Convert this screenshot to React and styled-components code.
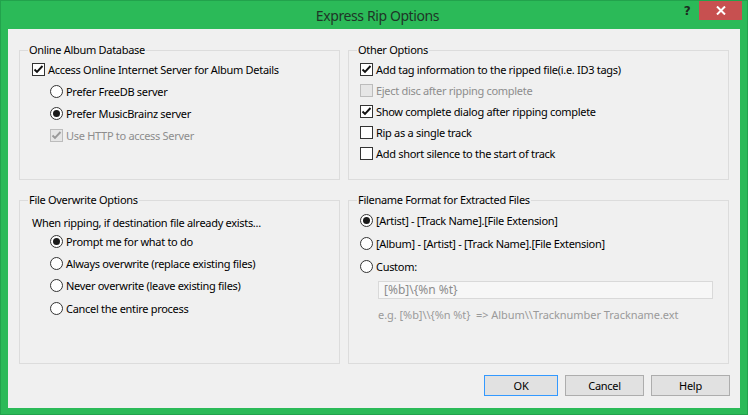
import React from "react";
import styled, { createGlobalStyle } from "styled-components";

const GlobalStyle = createGlobalStyle`
  html, body {
    margin: 0;
    padding: 0;
    background: #2bba58;
  }
  body {
    font-family: "Noto Sans", "Open Sans", sans-serif;
    font-size: 11px;
    letter-spacing: -0.3px;
    color: #000;
  }
`;

const Window = styled.div`
  width: 748px;
  height: 415px;
  box-sizing: border-box;
  background: #2bba58;
  border: 1px solid #22a24c;
  display: flex;
  flex-direction: column;
`;

const TitleBar = styled.div`
  height: 28px;
  display: flex;
  align-items: flex-start;
`;

const Title = styled.div`
  flex: 1;
  text-align: center;
  font-size: 14px;
  letter-spacing: -0.4px;
  line-height: 29px;
  color: #1f3527;
  padding-left: 71px;
`;

const HelpGlyph = styled.div`
  width: 8px;
  text-align: center;
  font-size: 12px;
  font-weight: 700;
  line-height: 21px;
  color: #1b2b20;
  margin-right: 8px;
  font-family: "DejaVu Sans", sans-serif;
`;

const CloseButton = styled.div`
  width: 43px;
  height: 19px;
  background: #c75050;
  display: flex;
  align-items: center;
  justify-content: center;
  margin-right: 5px;
`;

const Client = styled.div`
  flex: 1;
  margin: 0 7px 6px 7px;
  background: #f0f0f0;
  display: flex;
  flex-direction: column;
  padding: 21px 13px 0 11px;
`;

const Groups = styled.div`
  display: grid;
  grid-template-columns: 321px 381px;
  grid-template-rows: 130px 164px;
  column-gap: 8px;
  row-gap: 20px;
`;

const GroupBox = styled.fieldset`
  margin: 0;
  padding: 0;
  border: 1px solid #dcdcdc;
  min-width: 0;
  position: relative;
  display: flex;
  flex-direction: column;
  padding-top: ${(p) => p.$top || 8}px;
`;

const Legend = styled.legend`
  position: absolute;
  top: -9px;
  left: 8px;
  padding: 0 1px;
  background: #f0f0f0;
  line-height: 16px;
`;

const Row = styled.div`
  display: flex;
  align-items: center;
  height: ${(p) => p.$h || 22}px;
  padding-left: ${(p) => p.$indent || 0}px;
  gap: 3px;
  color: ${(p) => (p.$disabled ? "#8d8d8d" : "#000")};
  white-space: nowrap;
`;

const Box = styled.span`
  width: 13px;
  height: 13px;
  box-sizing: border-box;
  border: 1px solid ${(p) => (p.$disabled ? "#bcbcbc" : "#333")};
  background: ${(p) => (p.$disabled ? "#e6e6e6" : "#fff")};
  display: flex;
  align-items: center;
  justify-content: center;
  flex-shrink: 0;
`;

const Circle = styled.span`
  width: 13px;
  height: 13px;
  box-sizing: border-box;
  border-radius: 50%;
  border: 1px solid #333;
  background: #fff;
  display: flex;
  align-items: center;
  justify-content: center;
  flex-shrink: 0;
`;

const Dot = styled.span`
  width: 7px;
  height: 7px;
  border-radius: 50%;
  background: #1a1a1a;
`;

const Note = styled.div`
  height: ${(p) => p.$h || 16}px;
  line-height: ${(p) => p.$h || 16}px;
  padding-left: ${(p) => p.$indent || 0}px;
  margin-top: ${(p) => p.$mt || 0}px;
  color: ${(p) => p.$color || "#000"};
  letter-spacing: ${(p) => p.$ls ?? -0.3}px;
  white-space: pre;
`;

const TextInput = styled.div`
  margin: 3px 0 0 29px;
  width: 335px;
  height: 18px;
  box-sizing: border-box;
  border: 1px solid #d9d9d9;
  background: #f7f7f7;
  color: #8d8d8d;
  padding-left: 5px;
  font-size: 12px;
  letter-spacing: 0;
  line-height: 16px;
`;

const ButtonRow = styled.div`
  display: flex;
  justify-content: flex-end;
  gap: 7px;
  margin-top: 11px;
  margin-right: -3px;
`;

const Button = styled.div`
  width: ${(p) => p.$w || 79}px;
  height: 21px;
  box-sizing: border-box;
  background: #e1e1e1;
  border: 1px solid ${(p) => (p.$focus ? "#3399ff" : "#adadad")};
  display: flex;
  align-items: center;
  justify-content: center;
`;

const Check = ({ disabled }) => (
  <svg width="11" height="11" viewBox="0 0 11 11">
    <path
      d="M1.5 5.5 L4 8 L9.5 2"
      fill="none"
      stroke={disabled ? "#9a9a9a" : "#111"}
      strokeWidth="1.9"
    />
  </svg>
);

const CheckRow = ({ checked, disabled, indent, h, children }) => (
  <Row $indent={indent} $h={h} $disabled={disabled}>
    <Box $disabled={disabled}>{checked && <Check disabled={disabled} />}</Box>
    {children}
  </Row>
);

const RadioRow = ({ checked, indent, h, children }) => (
  <Row $indent={indent} $h={h}>
    <Circle>{checked && <Dot />}</Circle>
    {children}
  </Row>
);

export default function App() {
  return (
    <>
      <GlobalStyle />
      <Window>
        <TitleBar>
          <Title>Express Rip Options</Title>
          <HelpGlyph>?</HelpGlyph>
          <CloseButton>
            <svg width="10" height="9" viewBox="0 0 10 9">
              <path d="M1 0.5 L9 8.5 M9 0.5 L1 8.5" stroke="#fff" strokeWidth="2" />
            </svg>
          </CloseButton>
        </TitleBar>
        <Client>
          <Groups>
            <GroupBox $top={7}>
              <Legend>Online Album Database</Legend>
              <CheckRow checked indent={12}>
                Access Online Internet Server for Album Details
              </CheckRow>
              <RadioRow indent={30}>Prefer FreeDB server</RadioRow>
              <RadioRow checked indent={30}>
                Prefer MusicBrainz server
              </RadioRow>
              <CheckRow checked disabled indent={30}>
                Use HTTP to access Server
              </CheckRow>
            </GroupBox>
            <GroupBox $top={8}>
              <Legend>Other Options</Legend>
              <CheckRow checked indent={11} h={21}>
                Add tag information to the ripped file(i.e. ID3 tags)
              </CheckRow>
              <CheckRow disabled indent={11} h={21}>
                Eject disc after ripping complete
              </CheckRow>
              <CheckRow checked indent={11} h={21}>
                Show complete dialog after ripping complete
              </CheckRow>
              <CheckRow indent={11} h={21}>
                Rip as a single track
              </CheckRow>
              <CheckRow indent={11} h={21}>
                Add short silence to the start of track
              </CheckRow>
            </GroupBox>
            <GroupBox $top={14}>
              <Legend>File Overwrite Options</Legend>
              <Note $indent={12}>When ripping, if destination file already exists...</Note>
              <RadioRow checked indent={30} h={21}>
                Prompt me for what to do
              </RadioRow>
              <RadioRow indent={30}>Always overwrite (replace existing files)</RadioRow>
              <RadioRow indent={30} h={23}>
                Never overwrite (leave existing files)
              </RadioRow>
              <RadioRow indent={30} h={23}>
                Cancel the entire process
              </RadioRow>
            </GroupBox>
            <GroupBox $top={8}>
              <Legend>Filename Format for Extracted Files</Legend>
              <RadioRow checked indent={11} h={23}>
                [Artist] - [Track Name].[File Extension]
              </RadioRow>
              <RadioRow indent={11} h={23}>
                [Album] - [Artist] - [Track Name].[File Extension]
              </RadioRow>
              <RadioRow indent={11} h={23}>
                Custom:
              </RadioRow>
              <TextInput>[%b]\{"{"}%n %t{"}"}</TextInput>
              <Note $indent={29} $mt={8} $color="#9a9a9a" $ls={-0.05}>
                {"e.g. [%b]\\\\{%n %t}  => Album\\\\Tracknumber Trackname.ext"}
              </Note>
            </GroupBox>
          </Groups>
          <ButtonRow>
            <Button $focus $w={74}>
              OK
            </Button>
            <Button>Cancel</Button>
            <Button>Help</Button>
          </ButtonRow>
        </Client>
      </Window>
    </>
  );
}
